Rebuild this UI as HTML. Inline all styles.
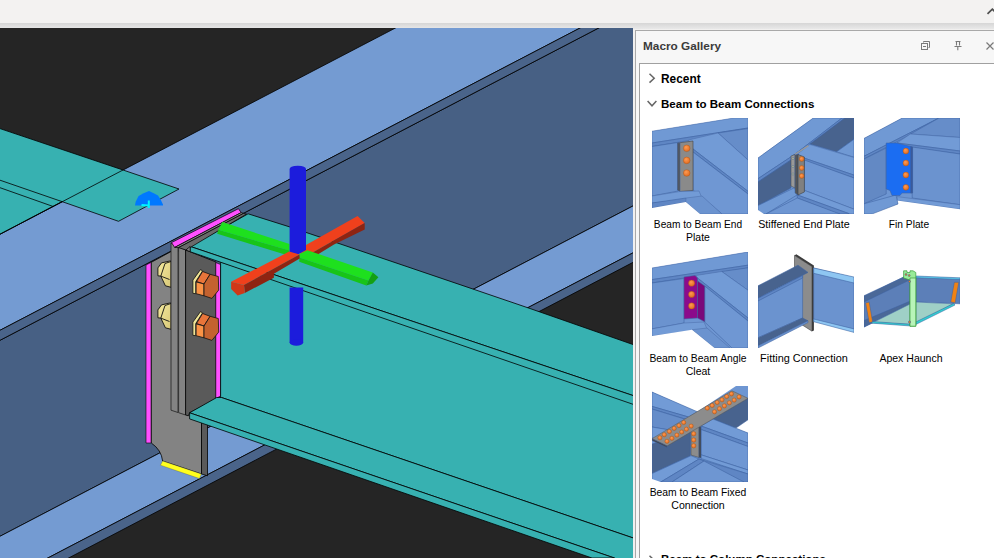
<!DOCTYPE html>
<html><head><meta charset="utf-8">
<style>
html,body{margin:0;padding:0;}
body{width:994px;height:558px;overflow:hidden;background:#f1f0ef;position:relative;font-family:"Liberation Sans",sans-serif;}
#top{position:absolute;left:0;top:0;width:994px;height:23px;background:#f3f2f1;}
#shadow{position:absolute;left:0;top:23px;width:994px;height:6px;background:linear-gradient(#d6d6d6,#e9e9e9);}
#scene{position:absolute;left:0;top:0;}
#panel{position:absolute;left:635px;top:30px;width:370px;height:540px;background:#f7f7f7;border:1px solid #a9a9a9;box-sizing:border-box;}
#title{position:absolute;left:643px;top:39px;font-weight:bold;font-size:11.8px;color:#3b3b3b;white-space:nowrap;}
#content{position:absolute;left:639px;top:63px;width:370px;height:520px;background:#fff;border:1px solid #a0a0a0;box-sizing:border-box;}
.hdr{position:absolute;font-weight:bold;font-size:11.5px;color:#000;white-space:nowrap;}
.lbl{position:absolute;width:200px;text-align:center;font-size:11px;line-height:13px;color:#000;white-space:nowrap;transform-origin:50% 50%;}
#icons{position:absolute;left:0;top:0;}
</style></head><body>
<div id="top"></div><div id="shadow"></div>
<svg id="scene" width="994" height="558" viewBox="0 0 994 558">
<defs><clipPath id="vp"><rect x="0" y="28" width="633" height="530"/></clipPath>
<linearGradient id="cream" x1="0" y1="0" x2="1" y2="1"><stop offset="0" stop-color="#f4ea9e"/><stop offset="1" stop-color="#d9c878"/></linearGradient>
</defs>
<g clip-path="url(#vp)" stroke-linejoin="round">
<rect x="0" y="28" width="633" height="530" fill="#252525"/>
<!-- blue beam -->
<g stroke="#000" stroke-width="0.8">
<polygon points="617.8,18 640,18 640,202.3 -5,538.9 -5,342.9" fill="#476084"/>
<polygon points="-5,236.8 414.6,18 599.2,18 -5,332.9" fill="#749bd2"/>
<polygon points="599.2,18 617.8,18 -5,342.9 -5,332.9" fill="#4a648a"/>
<polygon points="640,202.3 -5,538.9 -5,570 24.8,570 640,249.2" fill="#749bd2"/>
<polygon points="24.8,570 640,249.2 640,258.7 45.7,570" fill="#4a648a"/>
</g>
<!-- left teal beam -->
<g stroke="#000" stroke-width="0.8">
<polygon points="-5,126.9 0,128.6 123,170 179,189 118.5,221.3 62,201.6 0,234.2 -5,236" fill="#37b1b1"/>
<line x1="0" y1="234.2" x2="123" y2="170"/>
<line x1="0" y1="180.2" x2="62" y2="201.6"/>
<line x1="0" y1="187.7" x2="53.2" y2="206.5"/>
</g>
<!-- small blue marker -->
<polygon points="135,205.6 135.7,201.8 138.6,196.1 143.6,193.3 149,191.1 153.7,193.3 158,195.4 160.8,200 163,204.4 163,205.6" fill="#0078ff"/>
<path d="M141.5 205 L148.5 205.6 M148.8 200.4 L148.8 208" stroke="#00f6ff" stroke-width="2" fill="none"/>
<!-- stiffener in blue beam -->
<g stroke="#000" stroke-width="0.8">
<polygon points="146,265 151.3,262.3 151.3,443 146,443" fill="#ff50ff" stroke-width="0.6"/>
<path d="M151.3 262.3 L172 251 L201.5 251 L201.5 474 L162.6 461 Q161.5 450 151.3 443 Z" fill="#838383"/>
<polygon points="201.5,420 207.5,422 207.5,475.8 201.5,474" fill="#5a5a5a"/>
<polygon points="162.6,461 201.3,473.9 199.5,478.6 160.4,465.2" fill="#ffff1e" stroke="#444" stroke-width="0.3"/>
</g>
<!-- cream bolts -->
<g id="cb" stroke="#111" stroke-width="0.9">
<polygon points="157.9,267.9 161.5,262.9 169.4,261.1 171,261 171,287.3 165.4,285.8 160.8,276.1 157.9,275.8" fill="url(#cream)"/>
<path d="M165 263.5 L160.8 276.1 L169.5 279.5 M165 263.5 L171 261.5" fill="none"/>
</g>
<use href="#cb" y="42"/>
<!-- end plate strips -->
<g stroke="#000" stroke-width="0.8">
<polygon points="171,243 178,246 178,412.5 171,410.2" fill="#838383" stroke="#222"/>
<polygon points="178.6,247 185.6,250 185.6,415 178.6,412.7" fill="#838383" stroke="#222"/>
<polygon points="185.6,250 216,262 216,399 189.6,412.8 188.4,415.8 185.6,415" fill="#5a5a5a"/>
<polygon points="215.8,262.6 220.6,264.5 220.6,396 215.8,398.5" fill="#ff50ff" stroke-width="0.6"/>
</g>
<!-- orange bolts -->
<g id="ob" stroke="#111" stroke-width="0.8">
<polygon points="192.9,280.1 200.4,269.7 202.6,270.8 195.8,281.5 195.8,293.7 192.9,293.3" fill="#f0e596"/>
<polygon points="196.5,281.5 202.6,271.5 210.1,274.3 204,284" fill="#e8753a"/>
<polygon points="196.1,281.9 204,284 204,295.8 196.1,293.7" fill="#fb9346"/>
<polygon points="204,284 210.1,274.3 218.3,276.5 218.7,290.1 211.9,298.4 204,295.8" fill="#c4622f"/>
</g>
<use href="#ob" y="42"/>
<!-- teal beam -->
<g stroke="#000" stroke-width="0.8">
<!-- web -->
<polygon points="220.6,262 640,400 640,540.3 221.5,397.5 220.6,397.5" fill="#37b1b1"/>
<!-- bottom flange top -->
<polygon points="216.7,397.5 221.5,397.5 640,540.3 640,580 614.4,558 189.6,412.8" fill="#37b1b1"/>
<polygon points="189.6,412.8 614.4,558 592,558 189.6,418.9" fill="#37b1b1"/>
<!-- top flange -->
<polygon points="190.1,246.4 248.1,213.8 289,226.7 336,242.5 474,289.4 530,308.5 640,347 640,397.9" fill="#37b1b1"/>
<polygon points="190.1,246.4 640,397.9 640,406.7 190.1,251.7" fill="#37b1b1"/>
</g>
<!-- pink top strip and plate tops -->
<g stroke="#000" stroke-width="0.7">
<polygon points="171.5,242.6 238.4,208.7 241.2,212.6 174.7,247.4" fill="#ff50ff"/>
<polygon points="174.7,247.4 241.2,212.6 243.5,213.4 178.6,247.6" fill="#838383"/>
<polygon points="178.6,247.6 243.5,213.4 246.5,214 186,250" fill="#6a6a6a"/>
<polygon points="186,250 190.1,246.4 190.1,251.7" fill="#838383"/>
</g>
<!-- gizmo -->
<g>
<!-- blue lower -->
<rect x="289.6" y="287.5" width="13.6" height="55" fill="#1c1cdc"/>
<ellipse cx="296.4" cy="342.5" rx="6.8" ry="3.2" fill="#1c1cdc"/>
<!-- red upper-right -->
<polygon points="298,249.6 357.6,216.1 364.7,222.9 303,258" fill="#f0401c"/>
<polygon points="303,258 364.7,222.9 364.7,229.6 334,244.5 312,258" fill="#8e2412"/>
<!-- green upper-left -->
<polygon points="217.4,231.8 222.3,222.1 289.5,243.9 289.5,250.5 218.3,229.8" fill="#1ee01e"/>
<polygon points="218.3,229.8 289.5,250.5 289.5,255.5 285,254.6 217.2,233.8" fill="#18c418"/>
<!-- blue upper -->
<path d="M289.6 254 L289.6 169 Q289.6 166 297.8 165.8 Q306 166 306 169 L306 250 L297 255 Z" fill="#1c1cdc"/>
<!-- green lower-right -->
<polygon points="299.3,254 307.4,250.2 372.8,272.6 368.5,280.5 299.3,257.5" fill="#1ee01e"/>
<polygon points="299.3,257.5 368.5,280.5 366.3,285.4 299.3,261.8" fill="#18c418"/>
<polygon points="372.8,272.6 378.4,277.2 372.8,283.6 366.3,285.4 368.5,280.5" fill="#14a014"/>
<!-- red lower-left -->
<polygon points="231.1,281.8 289.2,251.6 299.5,254.4 244,285" fill="#f0401c"/>
<polygon points="244,285 299.5,254.6 299.7,258.4 273.9,273.7 273.9,277.7 244.8,293" fill="#8e2412"/>
<polygon points="231.1,281.8 244,285 244.8,293 237.6,295.5 231.1,289" fill="#d03818"/>
</g>
</g>
</svg>

<div id="panel"></div>
<div id="title">Macro Gallery</div>
<div id="content"></div>
<div class="hdr" style="left:661px;top:71.6px;font-size:11.9px">Recent</div>
<div class="hdr" style="left:661px;top:98px;font-size:11.56px">Beam to Beam Connections</div>
<div class="hdr" style="left:661px;top:553px;font-size:11.56px">Beam to Column Connections</div>
<div class="lbl" style="left:597.7px;top:217.8px;transform:scaleX(0.925)">Beam to Beam End</div>
<div class="lbl" style="left:598.4px;top:230.8px;transform:scaleX(0.949)">Plate</div>
<div class="lbl" style="left:704.4px;top:217.8px;transform:scaleX(0.974)">Stiffened End Plate</div>
<div class="lbl" style="left:809.3px;top:217.8px;transform:scaleX(0.928)">Fin Plate</div>
<div class="lbl" style="left:598.4px;top:351.8px;transform:scaleX(0.941)">Beam to Beam Angle</div>
<div class="lbl" style="left:598.4px;top:364.8px;transform:scaleX(0.954)">Cleat</div>
<div class="lbl" style="left:703.8px;top:351.8px;transform:scaleX(0.990)">Fitting Connection</div>
<div class="lbl" style="left:810.6px;top:351.8px;transform:scaleX(0.957)">Apex Haunch</div>
<div class="lbl" style="left:597.9px;top:485.8px;transform:scaleX(0.940)">Beam to Beam Fixed</div>
<div class="lbl" style="left:598.2px;top:498.8px;transform:scaleX(0.961)">Connection</div>
<svg id="icons" width="994" height="558" viewBox="0 0 994 558">
<defs>
<clipPath id="tc"><rect x="0" y="0" width="96" height="96"/></clipPath>
<radialGradient id="og" cx="0.4" cy="0.35" r="0.7"><stop offset="0" stop-color="#ff9a50"/><stop offset="1" stop-color="#e06a20"/></radialGradient>
</defs>
<!-- top caret -->
<path d="M987.5 13.8 L992.3 9.2 L997 13.8" stroke="#505050" stroke-width="1.8" fill="none"/>
<!-- header icons -->
<g stroke="#7a7a7a" stroke-width="1" fill="none">
<path d="M923.5 42.5 V41.5 H929.5 V47.5 H928.5"/>
<rect x="921.5" y="43.5" width="6" height="6" fill="#f7f7f7"/>
<path d="M923 46.5 H926"/>
<path d="M955.5 41.5 H960.5 M956.5 41.5 V45.5 M959.5 41.5 V45.5 M954.5 46.5 H961.5 M957.8 47 V50.2" stroke-width="1.1"/>
<path d="M986.5 42.5 L993.5 49.5 M993.5 42.5 L986.5 49.5" stroke-width="1.2"/>
</g>
<!-- chevrons -->
<path d="M649.5 73.8 L654.2 78.2 L649.5 82.6" stroke="#666" stroke-width="1.5" fill="none"/>
<path d="M647.6 101 L652 105.8 L656.4 101" stroke="#666" stroke-width="1.5" fill="none"/>
<path d="M649.5 555.8 L654.2 560.2 L649.5 564.6" stroke="#666" stroke-width="1.5" fill="none"/>

<!-- T1: Beam to Beam End Plate -->
<g transform="translate(652,118)" clip-path="url(#tc)" stroke="#3f63a2" stroke-width="0.55" stroke-linejoin="round">
<rect width="96" height="96" fill="#6e96d2" stroke="none"/>
<polygon points="0,0 82,0 0,13.2" fill="#fff" stroke="none"/>
<polygon points="0,13.2 82,0 96,0 96,10 0,25" fill="#7099d4" stroke="#4a6ca8" stroke-width="0.5"/>
<polygon points="0,25 96,10 96,13 0,28.5" fill="#5f86c4"/>
<polygon points="0,28.5 26,24.5 26,73 0,78" fill="#6b93cf"/>
<!-- secondary beam far side -->
<polygon points="66,15 96,10.5 96,42" fill="#668dc9"/>
<polygon points="36.5,22 66,15 96,42 96,73.3 41,31" fill="#729bd6" stroke="#4a6ca8" stroke-width="0.5"/>
<polygon points="41,31 96,73.3 96,76 41,34" fill="#5f86c4"/>
<polygon points="41,34 96,76 96,96 70,96 41,72" fill="#6f97d3"/>
<polygon points="25.8,25 41,23 41,72.4 28,73.5 25.8,72" fill="#8a8a8a" stroke="#444" stroke-width="0.6"/>
<polygon points="25.8,25 28,25 28,73.5 25.8,72" fill="#555"/>
<circle cx="34.7" cy="30.3" r="3.3" fill="url(#og)" stroke="#a8500f" stroke-width="0.4"/><circle cx="34.7" cy="42.4" r="3.3" fill="url(#og)" stroke="#a8500f" stroke-width="0.4"/><circle cx="34.7" cy="55" r="3.3" fill="url(#og)" stroke="#a8500f" stroke-width="0.4"/>
<polygon points="0,78 28,73.5 47,73 50,80 0,85" fill="#729bd6" stroke="#4a6ca8" stroke-width="0.5"/>
<polygon points="0,85 34,80 36,84 0,90" fill="#5f86c4"/>
<polygon points="34,80 50,78 70,96 48,96 33.8,84" fill="#6b93cf" stroke="#4a6ca8" stroke-width="0.5"/>
<polygon points="0,90 33.8,84 48,96 0,96" fill="#fff" stroke="none"/>
</g>

<!-- T2: Stiffened End Plate -->
<g transform="translate(758,118)" clip-path="url(#tc)" stroke="#3f63a2" stroke-width="0.55" stroke-linejoin="round">
<rect width="96" height="96" fill="#6e96d2" stroke="none"/>
<polygon points="0,0 55.3,0 0,40" fill="#fff" stroke="none"/>
<polygon points="0,40 55.3,0 84,0 36.5,36.5 0,60.7" fill="#7099d4"/>
<polygon points="0,60.7 36.5,36.5 84,0 87,0 36.5,39.5 0,64" fill="#5f86c4"/>
<polygon points="0,64 33,42 33,70 0,87.6" fill="#48638e"/>
<polygon points="51.8,26 87,0 96,0 96,21.3 78.6,33.8" fill="#48638e"/>
<polygon points="78.6,33.8 96,21.3 96,39.2" fill="#7099d4"/>
<polygon points="0,87.6 36.5,69.7 39.2,76.9 8,96 0,96" fill="#7099d4"/>
<polygon points="0,92 6,96 0,96" fill="#fff" stroke="none"/>
<!-- secondary -->
<polygon points="40,35.6 51.8,26.5 96,39.5 96,57.1 41,38.3" fill="#729bd6" stroke="#4a6ca8" stroke-width="0.5"/>
<polygon points="41,38.3 96,57.1 96,60 41,41" fill="#5f86c4"/>
<polygon points="46.4,42 96,60 96,91.2 46.4,72.4" fill="#6f97d3"/>
<polygon points="46.4,72.4 96,91.2 96,96 91.2,95.7 39.2,76.9" fill="#729bd6" stroke="#4a6ca8" stroke-width="0.5"/>
<polygon points="39.2,76.9 91.2,95.7 80,96 39.2,80" fill="#5f86c4"/>
<polygon points="39.2,80 82,96 30,96 8,96" fill="#6e96d2"/>
<polygon points="33,38 37,36.5 37,70 33,68" fill="#999" stroke="#444" stroke-width="0.5"/>
<polygon points="37,36.5 40,36.5 40,77 37,75" fill="#555"/>
<polygon points="40,36.5 46.4,39 46.4,74 40,77" fill="#808080" stroke="#333" stroke-width="0.5"/>
<path d="M37 36.3 L50.5 27.6" stroke="#9a9a9a" stroke-width="1.3" fill="none"/><circle cx="43.7" cy="41" r="2.4" fill="url(#og)" stroke="#a8500f" stroke-width="0.4"/><circle cx="43.7" cy="50" r="2.4" fill="url(#og)" stroke="#a8500f" stroke-width="0.4"/><circle cx="43.7" cy="58" r="2.4" fill="url(#og)" stroke="#a8500f" stroke-width="0.4"/>
<circle cx="35" cy="40.5" r="1" fill="#e6d880"/><circle cx="35" cy="48.5" r="1" fill="#e6d880"/><circle cx="35" cy="56" r="1" fill="#e6d880"/>
</g>

<!-- T3: Fin Plate -->
<g transform="translate(864,118)" clip-path="url(#tc)" stroke="#3f63a2" stroke-width="0.55" stroke-linejoin="round">
<rect width="96" height="96" fill="#6e96d2" stroke="none"/>
<polygon points="0,0 38.3,0 0,20.4" fill="#fff" stroke="none"/>
<polygon points="0,20.4 38.3,0 75,0 0,38.3" fill="#7099d4"/>
<polygon points="0,38.3 75,0 78,0 0,41" fill="#5f86c4"/>
<polygon points="75,0 96,0 96,19.5 46.4,16" fill="#668dc9"/>
<polygon points="0,41 22.2,30 22.2,76 0,85.8" fill="#6389c4"/>
<polygon points="33,25 46.4,16 96,19.5 96,33" fill="#729bd6" stroke="#4a6ca8" stroke-width="0.5"/>
<polygon points="33,25 96,33 96,36 33,27.5" fill="#5f86c4"/>
<polygon points="48.2,29 96,36 96,86.7 48.2,80" fill="#6b93cf"/>
<polygon points="33,78.6 96,86.7 96,91.2 33,82.5" fill="#729bd6" stroke="#4a6ca8" stroke-width="0.5"/>
<polygon points="33,82.5 96,91.2 96,96 0,96 34,86" fill="#fff" stroke="none"/>
<polygon points="0,85.8 32,77 34,86 8,96 0,96" fill="#7099d4"/>

<path d="M22.2 25 L33 25 L48.2 29 L48.2 75 L38 75 L36 77.5 L28 77.5 L26 72.5 L22.2 71 Z" fill="#1b6df2"/>
<polygon points="46.6,28.6 48.6,29 48.6,75 46.6,75" fill="#3a5a9a"/>
<circle cx="41.9" cy="33" r="2.9" fill="url(#og)" stroke="#a8500f" stroke-width="0.4"/><circle cx="41.9" cy="45" r="2.9" fill="url(#og)" stroke="#a8500f" stroke-width="0.4"/><circle cx="41.9" cy="57" r="2.9" fill="url(#og)" stroke="#a8500f" stroke-width="0.4"/><circle cx="41.9" cy="69.3" r="2.9" fill="url(#og)" stroke="#a8500f" stroke-width="0.4"/>
</g>

<!-- T4: Angle Cleat -->
<g transform="translate(652,252)" clip-path="url(#tc)" stroke="#3f63a2" stroke-width="0.55" stroke-linejoin="round">
<rect width="96" height="96" fill="#6e96d2" stroke="none"/>
<polygon points="0,0 96,0 0,16" fill="#fff" stroke="none"/>
<polygon points="0,16 96,0 96,13.2 0,27.6" fill="#7099d4" stroke="#4a6ca8" stroke-width="0.5"/>
<polygon points="0,27.6 96,13.2 96,16 0,31" fill="#5f86c4"/>
<polygon points="0,31 32,26.5 32,71 0,76.9" fill="#6b93cf"/>
<polygon points="69.7,19.5 96,15.8 96,38.3" fill="#668dc9"/>
<polygon points="43.7,23.5 69.7,19.5 96,38.3 96,66 45.5,26" fill="#729bd6" stroke="#4a6ca8" stroke-width="0.5"/>
<polygon points="45.5,26 96,66 96,69 45.5,29" fill="#5f86c4"/>
<polygon points="52.7,34 96,69 96,96 80,96 52.7,70" fill="#6f97d3"/>
<polygon points="0,76.9 32,71 52,70 55,77 0,84" fill="#729bd6" stroke="#4a6ca8" stroke-width="0.5"/>
<polygon points="40,77.7 55,76 78,96 62.5,96" fill="#6b93cf" stroke="#4a6ca8" stroke-width="0.5"/>
<polygon points="0,84 40,77.7 62.5,96 0,96" fill="#fff" stroke="none"/>
<polygon points="32,25 43,23.5 45.5,26 45.5,66 32,67" fill="#8b0a8b"/>
<polygon points="45.5,29 52.7,34 52.7,69.7 45.5,66" fill="#7a097a"/>
<circle cx="39.6" cy="31.2" r="3.1" fill="url(#og)" stroke="#a8500f" stroke-width="0.4"/><circle cx="39.6" cy="42.4" r="3.1" fill="url(#og)" stroke="#a8500f" stroke-width="0.4"/><circle cx="39.6" cy="53.9" r="3.1" fill="url(#og)" stroke="#a8500f" stroke-width="0.4"/>
</g>

<!-- T5: Fitting Connection -->
<g transform="translate(758,252)" clip-path="url(#tc)" stroke="#3f63a2" stroke-width="0.55" stroke-linejoin="round">
<rect width="96" height="96" fill="#fff" stroke="none"/>
<polygon points="36.5,3.4 54,14.7 54,79.2 36.5,68" fill="#8c8c8c" stroke="#444" stroke-width="0.6"/>
<polygon points="36.5,3.4 38.3,2.3 55.9,13.6 55.9,78.6 54,79.2 54,14.7" fill="#3c3c3c" stroke="none"/>
<polygon points="0,33.8 40,13.2 50,20.4 0,46.4" fill="#48638e"/>
<polygon points="0,46.4 44.6,23.5 44.6,66 0,85.8" fill="#6b93cf"/>
<polygon points="0,46.4 44.6,23.5 44.6,26 0,49" fill="#5f86c4"/>
<polygon points="0,85.8 44.6,66 50,68.8 0,94" fill="#48638e"/>
<polygon points="0,94 50,68.8 50,70.5 0,96" fill="#6b93cf"/>
<polygon points="55.7,16 96,25.8 96,78.6 55.7,68.8" fill="#6b93cf"/>
<polygon points="55.7,16 96,25 96,31 55.7,21.3" fill="#8ec6f2"/>
<polygon points="55.7,67 96,76.9 96,80.4 55.7,69.7" fill="#8ec6f2"/>
</g>

<!-- T6: Apex Haunch -->
<g transform="translate(864,252)" clip-path="url(#tc)" stroke="#3f63a2" stroke-width="0.55" stroke-linejoin="round">
<rect width="96" height="96" fill="#fff" stroke="none"/>
<polygon points="0,44.6 40,24.9 46.4,26.7 46.4,51.8 0,75" fill="#5c7fb8"/>
<polygon points="0,43.7 40,24.9 46.4,27.6 0,50" fill="#4a6898"/>
<polygon points="0,68.5 46.4,49 46.4,52.5 0,75" fill="#4a6898"/>
<polygon points="8.8,70.6 46.4,51.8 46.4,72.4" fill="#9fd0c6"/>
<polygon points="8,69.5 47,72.3 47,74 8,71.2" fill="#30d0d0"/>
<polygon points="1.6,50.9 5.2,50 8.6,69.7 5.2,70.8" fill="#f08214"/>
<polygon points="51.8,24.9 96,26.7 96,51.8 51.8,50" fill="#5c7fb8"/>
<polygon points="51.8,24 96,25.8 96,27.5 51.8,25.8" fill="#58c8e8"/>
<polygon points="51.8,50 89.4,51.8 51.8,71.5" fill="#9fd0c6"/>
<polygon points="51.8,70 89.6,51.5 91,53 51.8,72.5" fill="#30d0d0"/>
<polygon points="90.3,30.3 94.8,30.3 91.2,50.9 86.7,50" fill="#f08214"/>
<path d="M39.6 18.8 L43 18.8 L43 20.5 L46 20.5 L46 18.8 L49 18.8 L51.8 20.5 L51.8 74.2 L46 74.2 L46 28 L39.6 26 Z" fill="#98ec98" stroke="#3c9c3c" stroke-width="0.7"/>
<polygon points="46,26 51.8,26 51.8,74.2 46,74.2" fill="#b8f4b8" stroke="#3c9c3c" stroke-width="0.7"/>
<circle cx="42" cy="22.5" r="1" fill="#f08214"/><circle cx="45.2" cy="23.5" r="1" fill="#f08214"/><circle cx="45.5" cy="29.5" r="1" fill="#f08214"/><circle cx="45.5" cy="70" r="1.1" fill="#f08214"/>
</g>

<!-- T7: Fixed Connection -->
<g transform="translate(652,386)" clip-path="url(#tc)" stroke="#3f63a2" stroke-width="0.55" stroke-linejoin="round">
<rect width="96" height="96" fill="#6e96d2" stroke="none"/>
<polygon points="0,0 0,6 45,26 84,0" fill="#fff" stroke="none"/>
<polygon points="96,32 82,42 96,47" fill="#fff" stroke="none"/>
<!-- beam A upper-left -->
<polygon points="0,6 45.5,25.8 36.5,31 0,20.4" fill="#729bd6"/>
<polygon points="0,20.4 36.5,31 36.5,34 0,23" fill="#5f86c4"/>
<polygon points="0,23 34,33.5 34,47 0,41" fill="#668dc9"/>
<polygon points="0,41 30,46 14,55 0,52" fill="#729bd6"/>
<!-- beam B right arm dark web -->
<polygon points="60,33 96,12.3 96,33.8 84,42" fill="#48638e"/>
<!-- beam A lower-right -->
<polygon points="49,40 61,33 96,47 96,57" fill="#729bd6"/>
<polygon points="49,40 96,57 96,60.5 49,43.5" fill="#5f86c4"/>
<polygon points="49,43.5 96,60.5 96,84 49,68.8" fill="#6f97d3"/>
<polygon points="49,68.8 96,84 96,88 49,72.5" fill="#729bd6"/>
<polygon points="47,73 96,88 96,96 90,96" fill="#5f86c4"/>
<!-- beam B left arm -->
<polygon points="0,58 38.3,45.5 38.3,69.7 0,87.6" fill="#48638e"/>
<polygon points="0,87.6 39,69.7 47,73 8.8,96 0,96" fill="#729bd6"/>
<polygon points="0,93 8.8,96 0,96" fill="#fff" stroke="none"/>
<polygon points="8.8,96 47,73 52,75 20,96" fill="#5f86c4"/>
<polygon points="20,96 52,75 92,96" fill="#6e96d2"/>
<!-- vertical plate -->
<polygon points="39,42 47,40 47,71.5 39,69" fill="#8c8c8c" stroke="#444" stroke-width="0.5"/>
<polygon points="47,40 49,41 49,72 47,71.5" fill="#444"/>
<circle cx="41.7" cy="47.8" r="2.2" fill="url(#og)" stroke="#a8500f" stroke-width="0.4"/><circle cx="41.7" cy="54" r="2.2" fill="url(#og)" stroke="#a8500f" stroke-width="0.4"/><circle cx="41.7" cy="59.8" r="2.2" fill="url(#og)" stroke="#a8500f" stroke-width="0.4"/>
<!-- top plate -->
<polygon points="0,52.7 80,4.8 96,12.3 15,60" fill="#8c8c8c" stroke="#555" stroke-width="0.5"/>
<polygon points="0,52.7 15,60 15,61.5 0,54.5" fill="#444"/>
<g fill="url(#og)" stroke="#a8500f" stroke-width="0.4">
<circle cx="7.9" cy="51.8" r="2.1"/><circle cx="12.3" cy="48.7" r="2.1"/><circle cx="17.4" cy="45.5" r="2.1"/><circle cx="22.2" cy="42.4" r="2.1"/><circle cx="27.0" cy="39.6" r="2.1"/><circle cx="31.7" cy="36.5" r="2.1"/><circle cx="55.3" cy="22.2" r="2.1"/><circle cx="60.2" cy="19.5" r="2.1"/><circle cx="65.2" cy="16.5" r="2.1"/><circle cx="70.0" cy="13.8" r="2.1"/><circle cx="74.7" cy="10.5" r="2.1"/><circle cx="79.5" cy="7.9" r="2.1"/><circle cx="15.0" cy="55.3" r="2.1"/><circle cx="19.9" cy="52.3" r="2.1"/><circle cx="24.9" cy="49.1" r="2.1"/><circle cx="29.7" cy="46.0" r="2.1"/><circle cx="34.4" cy="43.2" r="2.1"/><circle cx="39.2" cy="40.1" r="2.1"/><circle cx="62.5" cy="25.8" r="2.1"/><circle cx="67.5" cy="22.7" r="2.1"/><circle cx="72.4" cy="19.9" r="2.1"/><circle cx="77.4" cy="16.8" r="2.1"/><circle cx="82.2" cy="14.1" r="2.1"/><circle cx="87.1" cy="10.9" r="2.1"/>
</g>
</g>
</svg>

</body></html>
